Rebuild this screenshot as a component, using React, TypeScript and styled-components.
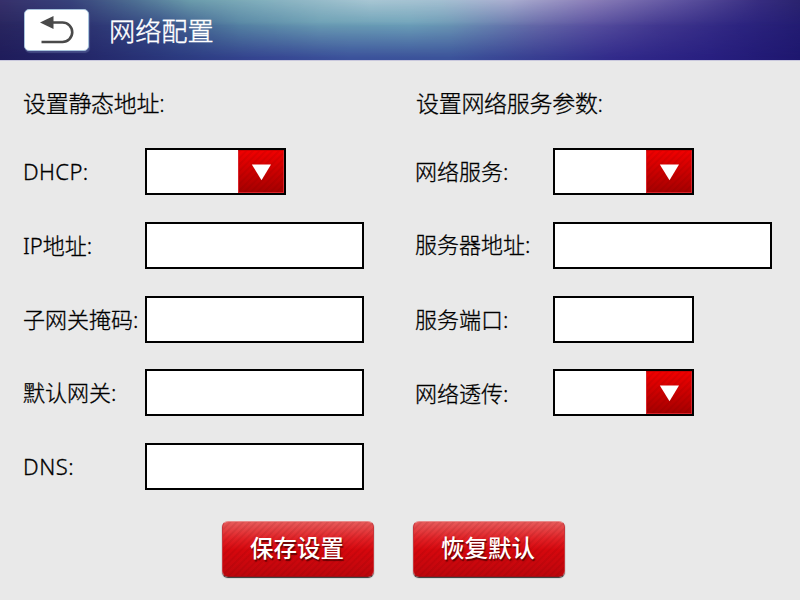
import React from 'react';
import styled, { createGlobalStyle } from 'styled-components';

const GlobalStyle = createGlobalStyle`
  * { box-sizing: border-box; }
  body {
    margin: 0;
    background: #e9e9e9;
    font-family: 'Open Sans', 'Noto Sans CJK SC', sans-serif;
  }
  button, input { font: inherit; }
`;

const Screen = styled.div`
  width: 800px;
  height: 600px;
  overflow: hidden;
  background: #e9e9e9;
  color: #000;
`;

const Header = styled.header`
  position: relative;
  isolation: isolate;
  display: flex;
  align-items: flex-start;
  height: 60px;
  padding: 9px 0 0 24px;
  background: linear-gradient(90deg, #1f1c5b 0, #232668 80px, #2b3a80 180px, #354591 260px, #3b529b 350px, #3b539a 450px, #383f92 530px, #31298a 620px, #281f80 710px, #1e176f 800px);
  box-shadow: inset 0 1px 0 rgba(255, 255, 255, 0.12), 0 1px 0 #c9c8dd;

  &::before, &::after {
    content: '';
    position: absolute;
    inset: 0;
    z-index: -1;
  }
  &::before {
    background: linear-gradient(90deg, #29265f 0, #2d3270 80px, #385089 160px, #5786a4 240px, #6b9fb4 320px, #6ea3b9 410px, #6c98b5 450px, #6983b0 490px, #6668a8 540px, #5a52a0 590px, #42388f 660px, #2d2580 740px, #231c72 800px);
    mask-image: linear-gradient(180deg, #000 22px, transparent 58px);
  }
  &::after {
    background: linear-gradient(90deg, #37316b 0, #37427b 70px, #4c6c91 130px, #6b9cab 190px, #82afbd 260px, #a8c6d3 370px, #a4c0d1 440px, #a9adcf 510px, #8c80b9 590px, #5f54a0 680px, #372d80 760px, #2b246f 800px);
    mask-image: linear-gradient(180deg, #000 0, transparent 26px);
  }
`;

const BackButton = styled.button`
  display: flex;
  width: 65px;
  height: 42px;
  padding: 0;
  border: 1px solid #a7c3dc;
  border-radius: 5px;
  background: #fff;
  box-shadow: 1px 2px 1px rgba(95, 105, 160, 0.55);
`;

const Title = styled.h1`
  margin: 4px 0 0 20px;
  color: #fff;
  font-size: 26.2px;
  font-weight: 300;
  line-height: 36px;
  -webkit-text-stroke: 0.4px #fff;
`;

const Form = styled.main`
  display: grid;
  grid-template-columns: 392px 1fr;
  height: 430px;
  padding: 28px 0 0 23px;
`;

const Column = styled.section``;

const Heading = styled.h2<{ $inset: number }>`
  height: 30px;
  margin: 0 0 30.4px ${p => p.$inset}px;
  font-size: 23px;
  font-weight: 300;
  line-height: 30px;
  letter-spacing: -0.3px;
  white-space: nowrap;
  -webkit-text-stroke: 0.3px #000;
`;

const Row = styled.div<{ $label: number }>`
  display: grid;
  grid-template-columns: ${p => p.$label}px 1fr;
  align-items: center;
  height: 47px;
  margin-bottom: 26.65px;
`;

const Label = styled.label<{ $lift: number; $spacing: number }>`
  padding-bottom: ${p => p.$lift * 2}px;
  font-family: 'Noto Sans', 'Noto Sans CJK SC', sans-serif;
  font-size: 22px;
  font-weight: 300;
  line-height: 30px;
  letter-spacing: ${p => p.$spacing}px;
  white-space: nowrap;
  -webkit-text-stroke: 0.3px #000;
`;

const TextField = styled.input<{ $width: number }>`
  width: ${p => p.$width}px;
  height: 47px;
  padding: 0 8px;
  border: 2px solid #000;
  border-radius: 0;
  background: #fff;
  outline: none;
`;

const SelectField = styled.div`
  display: flex;
  justify-content: flex-end;
  width: 141px;
  height: 47px;
  border: 2px solid #000;
  background: #fff;
`;

const stripes = 'repeating-linear-gradient(135deg, rgba(80, 0, 0, 0.09) 0 1.2px, transparent 2px 3.8px, rgba(80, 0, 0, 0.09) 4.6px)';

const SelectButton = styled.button`
  display: flex;
  align-items: center;
  justify-content: center;
  width: 46px;
  padding: 0;
  border: 1px solid #d8232a;
  border-top-color: #c00;
  background: ${stripes}, linear-gradient(#f00000, #a60000);
`;

const Actions = styled.footer`
  display: flex;
  gap: 39px;
  padding: 31px 0 0 222px;
`;

const ActionButton = styled.button`
  width: 152px;
  height: 56px;
  padding: 0 2px 2px 0;
  border: 1px solid #c8343a;
  border-top-color: #e88888;
  border-bottom-color: #9c1016;
  border-radius: 6px;
  background: ${stripes}, linear-gradient(#e75a5a 0, #e12025 17px, #d6070d 28px, #bd060c 100%);
  box-shadow: 0 1px 1px #333;
  color: #fff;
  font-size: 23.5px;
  font-weight: 500;
  line-height: 30px;
  text-shadow: 1px 2px 1px rgba(70, 0, 0, 0.75);
`;

type Field = { label: string; kind: 'select' | 'text'; width?: number; lift?: number; spacing?: number };

const addressFields: Field[] = [
  { label: 'DHCP:', kind: 'select', lift: 0.5, spacing: 0.4 },
  { label: 'IP地址:', kind: 'text', width: 219, lift: 1 },
  { label: '子网关掩码:', kind: 'text', width: 219 },
  { label: '默认网关:', kind: 'text', width: 219, lift: 1 },
  { label: 'DNS:', kind: 'text', width: 219, spacing: 0.5 },
];

const serviceFields: Field[] = [
  { label: '网络服务:', kind: 'select', lift: 0.5 },
  { label: '服务器地址:', kind: 'text', width: 219, lift: 2 },
  { label: '服务端口:', kind: 'text', width: 141 },
  { label: '网络透传:', kind: 'select' },
];

function BackIcon() {
  return (
    <svg width="63" height="40" viewBox="25 10 63 40" fill="none">
      <path d="M52 22.5H62.5A9.7 9.7 0 0 1 62.5 42H41.5" stroke="#4a4a4a" strokeWidth="2.6" />
      <path d="M40 22.5L53.5 16V29Z" fill="#4a4a4a" />
    </svg>
  );
}

function FieldRow({ field, labelWidth }: { field: Field; labelWidth: number }) {
  return (
    <Row $label={labelWidth}>
      <Label $lift={field.lift ?? 0} $spacing={field.spacing ?? 0}>{field.label}</Label>
      {field.kind === 'text' ? (
        <TextField $width={field.width ?? 219} aria-label={field.label} />
      ) : (
        <SelectField>
          <SelectButton aria-label={field.label}>
            <svg width="20" height="18" viewBox="0 0 20 18">
              <path d="M0.8 1.5H20L10.5 17.3Z" fill="#fff" />
            </svg>
          </SelectButton>
        </SelectField>
      )}
    </Row>
  );
}

export default function App() {
  return (
    <Screen>
      <GlobalStyle />
      <Header>
        <BackButton aria-label="返回"><BackIcon /></BackButton>
        <Title>网络配置</Title>
      </Header>
      <Form>
        <Column>
          <Heading $inset={0}>设置静态地址:</Heading>
          {addressFields.map(f => <FieldRow key={f.label} field={f} labelWidth={121.5} />)}
        </Column>
        <Column>
          <Heading $inset={1}>设置网络服务参数:</Heading>
          {serviceFields.map(f => <FieldRow key={f.label} field={f} labelWidth={138} />)}
        </Column>
      </Form>
      <Actions>
        <ActionButton>保存设置</ActionButton>
        <ActionButton>恢复默认</ActionButton>
      </Actions>
    </Screen>
  );
}
